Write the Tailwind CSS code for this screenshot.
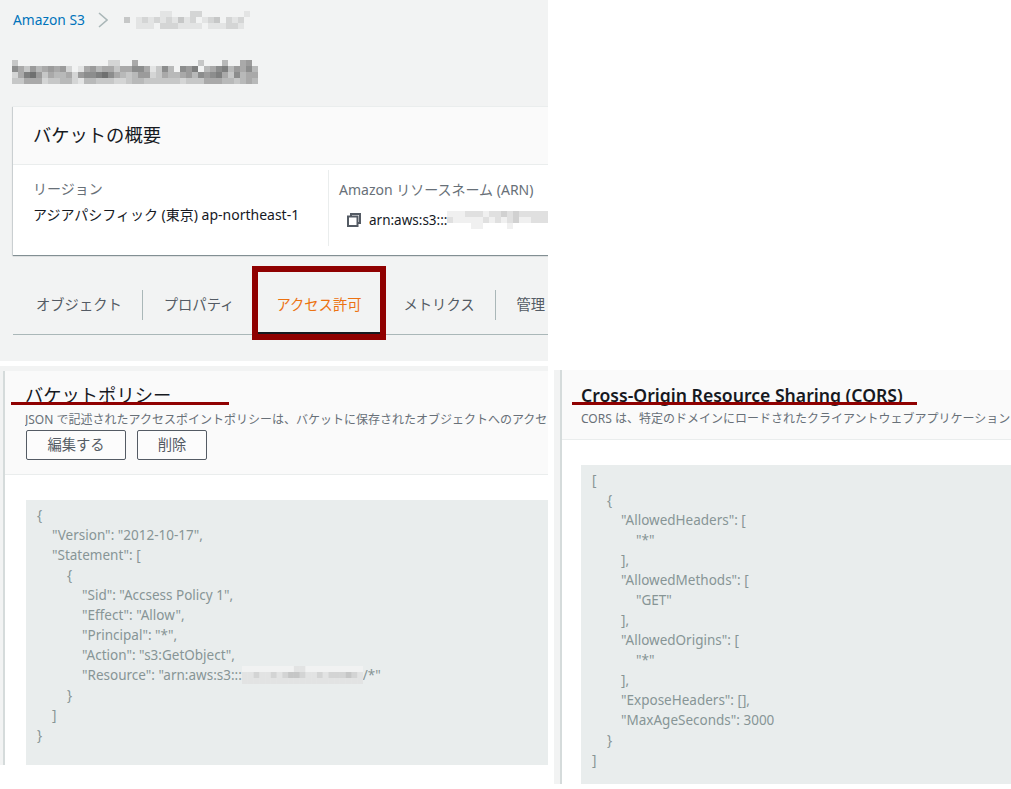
<!DOCTYPE html>
<html lang="ja">
<head>
  <meta charset="UTF-8" />
  <title>Amazon S3</title>
  <script src="https://cdn.jsdelivr.net/npm/@tailwindcss/browser@4"></script>
</head>
<body class="bg-white">
  <div class="w-[1011px] h-[789px] overflow-hidden flex font-['Noto_Sans','Noto_Sans_CJK_JP',sans-serif] text-[#16191f]">

    <!-- left column -->
    <div class="w-[548px] shrink-0 flex flex-col">

      <!-- bucket header -->
      <section class="h-[361px] bg-[#f2f3f3] pl-[13px] pt-[10px] flex flex-col overflow-hidden">
        <div class="flex items-center h-[20px]">
          <a class="text-[13.8px] text-[#0073bb]">Amazon S3</a>
          <svg class="ml-[13px] w-[10px] h-[16px] text-[#aab7b8]" viewBox="0 0 10 16" fill="none" stroke="currentColor" stroke-width="1.6"><path d="M1 1l8 7-8 7" /></svg>
          <svg data-mosaic="0000000110002200000001|0301212121312012302120|0001110222111101112210" data-cell="6" class="ml-[10px] w-[132px] h-[18px] blur-[0.5px]"></svg>
        </div>
        <svg data-mosaic="30000000000000002200500000000003000400560|75364565620156455355775137407680457846574|25896354452677897543466235445647678537455|33555233442144333223443333332333555443454" data-cell="6" class="mt-[30px] -ml-[1px] w-[246px] h-[24px] blur-[0.5px]"></svg>

        <div class="mt-[22px] w-[560px] h-[149px] bg-white border-t border-[#eaeded] shadow-[0_1px_1px_0_rgba(0,28,36,0.4),-1px_1px_1px_0_rgba(0,28,36,0.1)] flex flex-col shrink-0">
          <div class="h-[58px] bg-[#fafafa] border-b border-[#eaeded] pl-[20px] pb-[2px] flex items-center">
            <h2 class="text-[18.3px]">バケットの概要</h2>
          </div>
          <div class="flex pt-[5px] flex-1">
            <div class="w-[316px] h-[76px] border-r border-[#eaeded] pl-[20px] pt-[7px]">
              <div class="text-[14px] leading-[24px] text-[#687078]">リージョン</div>
              <div class="mt-[2px] text-[14px] leading-[24px]">アジアパシフィック (東京) ap-northeast-1</div>
            </div>
            <div class="pl-[10px] pt-[8px] min-w-0 flex-1">
              <div class="text-[14px] leading-[24px] text-[#687078]">Amazon リソースネーム (ARN)</div>
              <div class="mt-[9px] flex items-center h-[18px]">
                <svg class="ml-[8px] w-[14px] h-[14px] text-[#545b64]" viewBox="0 0 14 14" fill="none" stroke="currentColor" stroke-width="2"><path d="M4 3.5V1h9v9h-2.5" /><rect x="1" y="3.5" width="9.5" height="9.5" /></svg>
                <span class="ml-[8px] text-[13.5px]">arn:aws:s3:::</span>
                <svg data-mosaic="11122212232322222|21111121212311222|00001100001000000" data-cell="6" class="w-[102px] h-[18px] blur-[0.5px]"></svg>
              </div>
            </div>
          </div>
        </div>

        <!-- tabs -->
        <div class="relative mt-[20px] h-[60px] shrink-0 border-b border-[#aab7b8] flex items-center text-[14.3px] text-[#545b64]">
          <span class="pl-[23px] pr-[20px] border-r border-[#aab7b8] h-[30px] leading-[30px]">オブジェクト</span>
          <span class="pl-[21px] pr-[21px] h-[30px] leading-[30px]">プロパティ</span>
          <span class="pl-[21px] pr-[21px] h-[30px] leading-[30px] text-[#ec7211]">アクセス許可</span>
          <span class="pl-[21px] pr-[20px] border-r border-[#aab7b8] h-[30px] leading-[30px]">メトリクス</span>
          <span class="pl-[21px] h-[30px] leading-[30px]">管理</span>
          <!-- highlight round the active tab -->
          <div class="absolute left-[239px] top-[-9px] w-[134px] h-[74px] border-[6px] border-[#8f0000] shadow-[inset_0_-2px_0_0_#16191f] bg-transparent"></div>
        </div>
      </section>

      <!-- bucket policy -->
      <section class="relative mt-[5px] h-[399px] bg-[#f2f3f3] pl-[3px] pt-[5px]">
        <div class="h-full bg-white border-l-2 border-[#d5dbdb] flex flex-col">
          <div class="h-[104px] shrink-0 bg-[#fafafa] border-b border-[#eaeded] pl-[20px] pt-[10px]">
            <h2 class="text-[18.3px] leading-[28px]">バケットポリシー</h2>
            <p class="mt-[2px] text-[12px] leading-[17px] text-[#687078] whitespace-nowrap overflow-hidden">JSON で記述されたアクセスポイントポリシーは、バケットに保存されたオブジェクトへのアクセ</p>
            <div class="mt-[2px] ml-[1px] flex gap-[11px]">
              <button class="w-[100px] h-[30px] border border-[#545b64] rounded-[2px] text-[14.3px] text-[#545b64] bg-white/40">編集する</button>
              <button class="w-[70px] h-[30px] border border-[#545b64] rounded-[2px] text-[14.3px] text-[#545b64] bg-white/40">削除</button>
            </div>
          </div>
          <div class="mt-[25px] ml-[21px] flex-1 bg-[#e9eded] pt-[5px] pl-[11px] text-[13.5px] leading-[20px] text-[#879596]">
            <div>{</div>
            <div class="pl-[15px]">"Version": "2012-10-17",</div>
            <div class="pl-[15px]">"Statement": [</div>
            <div class="pl-[30px]">{</div>
            <div class="pl-[45px]">"Sid": "Accsess Policy 1",</div>
            <div class="pl-[45px]">"Effect": "Allow",</div>
            <div class="pl-[45px]">"Principal": "*",</div>
            <div class="pl-[45px]">"Action": "s3:GetObject",</div>
            <div class="pl-[45px] flex items-center">"Resource": "arn:aws:s3:::<svg data-mosaic="000000000110000000000|112112123321121222321|111111111111111111111" data-cell="6" data-base="#f1f2f2" class="w-[121px] h-[18px] blur-[0.5px]"></svg>/*"</div>
            <div class="pl-[30px]">}</div>
            <div class="pl-[15px]">]</div>
            <div>}</div>
          </div>
        </div>
        <div class="absolute left-[11px] top-[36px] w-[218px] h-[3px] bg-[#8f0000]"></div>
      </section>
      <div class="h-[24px] bg-white"></div>
    </div>

    <!-- CORS -->
    <section class="relative ml-[6px] mt-[370px] w-[457px] h-[414px] bg-[#f2f3f3] pl-[6px] shrink-0">
      <div class="h-full bg-white border-l-2 border-[#d5dbdb] flex flex-col">
        <div class="h-[70px] shrink-0 bg-[#fafafa] border-b border-[#eaeded] pl-[19px] pt-[11px]">
          <h2 class="text-[17.6px] leading-[28px] font-semibold whitespace-nowrap">Cross-Origin Resource Sharing (CORS)</h2>
          <p class="mt-[1px] text-[12px] leading-[17px] text-[#687078] whitespace-nowrap overflow-hidden">CORS は、特定のドメインにロードされたクライアントウェブアプリケーション</p>
        </div>
        <div class="mt-[25px] ml-[19px] flex-1 bg-[#e9eded] pt-[5px] pl-[11px] text-[13.5px] leading-[20px] text-[#879596]">
          <div>[</div>
          <div class="pl-[15px]">{</div>
          <div class="pl-[29px]">"AllowedHeaders": [</div>
          <div class="pl-[44px]">"*"</div>
          <div class="pl-[29px]">],</div>
          <div class="pl-[29px]">"AllowedMethods": [</div>
          <div class="pl-[44px]">"GET"</div>
          <div class="pl-[29px]">],</div>
          <div class="pl-[29px]">"AllowedOrigins": [</div>
          <div class="pl-[44px]">"*"</div>
          <div class="pl-[29px]">],</div>
          <div class="pl-[29px]">"ExposeHeaders": [],</div>
          <div class="pl-[29px]">"MaxAgeSeconds": 3000</div>
          <div class="pl-[15px]">}</div>
          <div>]</div>
        </div>
      </div>
      <div class="absolute left-[18px] top-[32px] w-[345px] h-[3px] bg-[#8f0000]"></div>
    </section>
  </div>

  <script>
    // blurred-out names: each row of digits is a row of grey cells
    document.querySelectorAll('svg[data-mosaic]').forEach(svg => {
      const cell = +svg.dataset.cell;
      const rows = svg.dataset.mosaic.split('|');
      const width = Math.max(...rows.map(r => r.length)) * cell;
      svg.setAttribute('viewBox', `0 0 ${width} ${rows.length * cell}`);
      svg.setAttribute('preserveAspectRatio', 'none');
      let out = svg.dataset.base ? `<rect width="${width}" height="${rows.length * cell}" fill="${svg.dataset.base}" />` : '';
      rows.forEach((row, y) => {
        [...row].forEach((n, x) => {
          if (n !== '0') out += `<rect x="${x * cell}" y="${y * cell}" width="${cell}" height="${cell}" fill="#000" fill-opacity="${n * 0.06}" />`;
        });
      });
      svg.innerHTML = out;
    });
  </script>
</body>
</html>
